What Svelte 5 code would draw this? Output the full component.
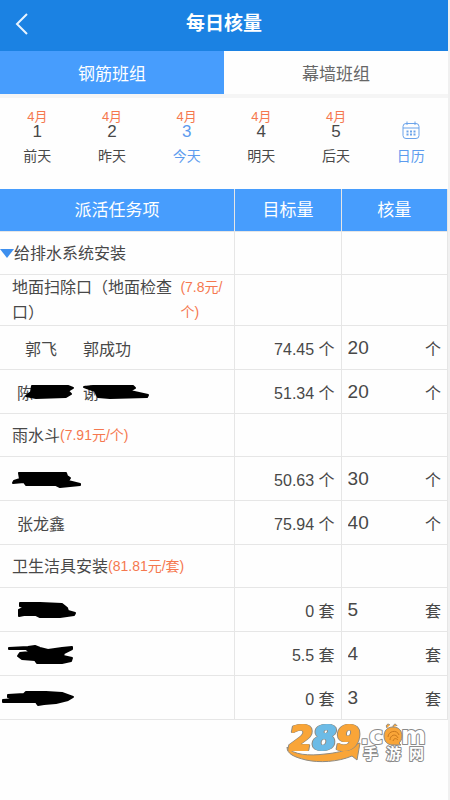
<script>
  let activeTeam = $state(0);
  let activeDay = $state(3);

  const teams = ["钢筋班组", "幕墙班组"];

  const days = [
    { day: 1, label: "前天" },
    { day: 2, label: "昨天" },
    { day: 3, label: "今天" },
    { day: 4, label: "明天" },
    { day: 5, label: "后天" },
  ];

  // people without a readable name are covered by a black scribble
  let rows = $state([
    { type: "root", name: "给排水系统安装" },
    { type: "task", name: "地面扫除口（地面检查口）", price: "(7.8元/个)" },
    { type: "person", people: ["郭飞", "郭成功"], target: "74.45", unit: "个", value: "20" },
    {
      type: "person", people: ["陈", "谢"], target: "51.34", unit: "个", value: "20", masked: true,
      scribbles: [
        "32,16 68,16 73,18 68,21 71,24 66,27 36,28 26,26 31,22",
        "84,17 93,16 133,16 135,18 130,21 148,25 147,27 110,28 98,27 95,21",
      ],
    },
    { type: "task", name: "雨水斗", price: "(7.91元/个)" },
    {
      type: "person", people: [], target: "50.63", unit: "个", value: "30",
      scribbles: ["19,16 66,16 67,19 70,21 68,24 80,27 80,28 70,29 60,30 56,28 26,28 24,25 13,26 14,24 20,22"],
    },
    { type: "person", people: ["张龙鑫"], target: "75.94", unit: "个", value: "40" },
    { type: "task", name: "卫生洁具安装", price: "(81.81元/套)" },
    {
      type: "person", people: [], target: "0", unit: "套", value: "5",
      scribbles: ["20,15 40,15 62,16 67,20 68,23 75,25 74,27 60,29 40,29 36,27 24,27 19,28 19,22 25,19 20,18"],
    },
    {
      type: "person", people: [], target: "5.5", unit: "套", value: "4",
      scribbles: ["9,16 28,15 35,14 40,16 48,18 62,16 72,15 72,17 64,21 63,24 72,26 71,29 62,31 37,31 35,28 22,27 18,24 20,21 30,20 26,17 9,17"],
    },
    {
      type: "person", people: [], target: "0", unit: "套", value: "3",
      scribbles: ["8,19 24,18 26,16 46,16 62,17 73,21 68,24 56,27 44,28 38,29 36,26 3,26 3,24 16,23 8,21"],
    },
  ]);
</script>

<main class="page">
  <header class="topbar">
    <button class="back" aria-label="返回">
      <svg viewBox="0 0 14 22" width="14" height="22">
        <path d="M12 1 2 11l10 10" />
      </svg>
    </button>
    <h1>每日核量</h1>
  </header>

  <nav class="teams">
    {#each teams as team, i}
      <button class:active={activeTeam === i} onclick={() => (activeTeam = i)}>{team}</button>
    {/each}
  </nav>

  <section class="days">
    {#each days as d}
      <button class:active={activeDay === d.day} onclick={() => (activeDay = d.day)}>
        <span class="month">4月</span>
        <span class="num">{d.day}</span>
        <span class="label">{d.label}</span>
      </button>
    {/each}
    <button class="calendar">
      <svg viewBox="0 0 18 19" width="18" height="19">
        <rect x="1" y="2.5" width="16" height="15" rx="3" />
        <path d="M1 7h16M5 .5v3.500M13 .5v3.500" />
        <path class="dots" d="M4.500 10.500h2M8 10.500h2M11.500 10.500h2M4.500 13.500h2M8 13.500h2M11.500 13.500h2" />
      </svg>
      <span class="label">日历</span>
    </button>
  </section>

  <table>
    <thead>
      <tr>
        <th class="task-col">派活任务项</th>
        <th>目标量</th>
        <th>核量</th>
      </tr>
    </thead>
    <tbody>
      {#each rows as row}
        <tr class={row.type}>
          {#if row.type === "person"}
            <td>
              <div class="people">
                {#each row.people as person}
                  <span class:masked={row.masked}>{person}</span>
                {/each}
              </div>
              {#if row.scribbles}
                <svg class="scribble" viewBox="0 0 160 43" width="160" height="43" aria-hidden="true">
                  {#each row.scribbles as points}
                    <polygon {points} />
                  {/each}
                </svg>
              {/if}
            </td>
            <td class="target">{row.target} {row.unit}</td>
            <td>
              <label class="amount">
                <input type="text" inputmode="decimal" aria-label="核量" bind:value={row.value} />
                <span>{row.unit}</span>
              </label>
            </td>
          {:else}
            <td>
              <div class="task-name">
                {#if row.type === "root"}
                  <svg class="caret" viewBox="0 0 14 9" width="14" height="9"><path d="M0 0h14L7 9z" /></svg>
                {/if}
                <span class="name">{row.name}</span>
                {#if row.price}<span class="price">{row.price}</span>{/if}
              </div>
            </td>
            <td></td>
            <td></td>
          {/if}
        </tr>
      {/each}
    </tbody>
  </table>

  <svg class="logo" viewBox="0 0 150 46" width="150" height="46" role="img" aria-label="289.com 手游网">
    <path class="swoosh" d="M7 29c6 8 22 9 38 7 11-1 19-3 25-6l-2-1 12-4-3 17-5-4c-14 6-33 7-46 4C14 39 7 36 7 29z" />
    <text class="big" x="9" y="32">2<tspan class="sky">8</tspan>9</text>
    <text class="dot" x="80" y="26">.c</text>
    <text class="dot" x="121" y="26">m</text>
    <path class="snail" d="M107 10c-2-3 1-5 3-3M113 9c0-3 3-4 4-1M113 9c6 0 9 4 9 9 0 4-2 6-3 7l2 2h-8c-6 0-9-4-9-9s3-9 9-9z" />
    <path class="shell" d="M108 19c0-6 9-8 11-2M110 22c0-5 6-7 8-2M113 23c1-3 3-3 5-1" />
    <text class="cn" x="83" y="41">手</text>
    <text class="cn" x="106" y="41">游</text>
    <text class="cn" x="129" y="41">网</text>
  </svg>
</main>

<style>
  :global(body) {
    margin: 0;
    background: #fefefe;
  }

  .page {
    --blue: #1b82e3;
    --light-blue: #479dfd;
    --orange: #f5784f;
    --text: #484848;
    --line: #e6e6e6;
    position: relative;
    box-sizing: border-box;
    min-height: 100vh;
    border-right: 2px solid #f0f0f0;
    color: var(--text);
    font-family: "Liberation Sans", "Noto Sans CJK SC", sans-serif;
    font-size: 16px;
  }

  button {
    margin: 0;
    padding: 0;
    border: 0;
    background: none;
    color: inherit;
    font: inherit;
    cursor: pointer;
  }

  .topbar {
    display: grid;
    grid-template-columns: 48px 1fr 48px;
    align-items: center;
    box-sizing: border-box;
    height: 51px;
    padding-bottom: 4px;
    background: var(--blue);
    color: #fff;
  }

  .back {
    height: 44px;
  }

  .back svg {
    display: block;
    margin-left: 15px;
  }

  .back path {
    fill: none;
    stroke: #e8f4ff;
    stroke-width: 2;
  }

  h1 {
    margin: 0;
    font-size: 19px;
    line-height: 28px;
    text-align: center;
  }

  .teams {
    display: flex;
    border-bottom: 4px solid #f5f5f5;
  }

  .teams button {
    flex: 1;
    height: 43px;
    font-size: 17px;
    color: #666;
  }

  .teams button.active {
    background: var(--light-blue);
    color: #fff;
  }

  .days {
    display: flex;
    height: 91px;
  }

  .days button {
    flex: 1;
    display: flex;
    flex-direction: column;
    align-items: center;
    padding-top: 12px;
  }

  .month {
    font-size: 13px;
    line-height: 14px;
    color: var(--orange);
  }

  .num {
    font-size: 17px;
    line-height: 16px;
  }

  .label {
    margin-top: 6px;
    font-size: 14px;
    line-height: 20px;
  }

  .days .active .num,
  .days .active .label,
  .days .calendar {
    color: #5c9bee;
  }

  .days .calendar {
    padding-top: 23px;
  }

  .calendar svg {
    fill: none;
    stroke: #6ba3ea;
  }

  .calendar .dots {
    stroke-width: 2;
  }

  table {
    width: 100%;
    table-layout: fixed;
    border-collapse: separate;
    border-spacing: 0;
  }

  th,
  td {
    box-sizing: border-box;
    padding: 0;
    border-right: 1px solid var(--line);
    border-bottom: 1px solid var(--line);
  }

  th {
    height: 43px;
    padding-bottom: 3px;
    background: var(--light-blue);
    color: #fff;
    font-size: 17px;
    font-weight: 400;
  }

  .task-col {
    width: 52.5%;
  }

  td {
    position: relative;
    height: 44px;
  }

  .root td,
  .task td {
    height: 43px;
  }

  .task-name {
    display: flex;
    align-items: center;
    padding: 0 8px 0 12px;
    line-height: 25px;
  }

  .root .task-name {
    padding-left: 0;
  }

  .name {
    flex-shrink: 1;
  }

  .price {
    flex-shrink: 2;
    font-size: 14px;
    color: var(--orange);
  }

  .caret {
    flex: none;
    fill: #3d8fee;
  }

  .people {
    display: flex;
    gap: 18px;
    padding-left: 17px;
  }

  .people span {
    width: 48px;
    text-align: center;
  }

  .people .masked {
    text-align: left;
  }

  .scribble {
    position: absolute;
    top: 0;
    left: 0;
    fill: #000;
    stroke: #000;
    stroke-width: 2;
    stroke-linejoin: round;
  }

  .target {
    padding-right: 6px;
    text-align: right;
  }

  .amount {
    display: flex;
    align-items: center;
    padding: 0 6px;
  }

  .amount input {
    flex: 1;
    min-width: 0;
    padding: 0;
    border: 0;
    outline: 0;
    background: none;
    color: inherit;
    font: inherit;
    font-size: 19px;
  }

  .logo {
    position: absolute;
    right: 18px;
    bottom: 36px;
  }

  .logo text {
    font-family: "DejaVu Sans", sans-serif;
    font-weight: 700;
    stroke: #8a8a8a;
    stroke-width: 2;
    stroke-linejoin: round;
    paint-order: stroke;
    fill: #fff;
  }

  /* fat digits: stroke in the fill colour, thin grey rim from the shadows */
  .logo .big {
    font-size: 34px;
    font-style: italic;
    fill: #f9a538;
    stroke: #f9a538;
    filter: drop-shadow(1px 0 0 #8f8a80) drop-shadow(-1px 0 0 #8f8a80);
  }

  .logo .sky {
    fill: #6cbbe6;
    stroke: #6cbbe6;
  }

  .logo .dot {
    font-size: 24px;
  }

  .logo .cn {
    font-family: "Noto Sans CJK SC", sans-serif;
    font-size: 15px;
  }

  .swoosh,
  .snail {
    fill: #f9a538;
    stroke: #8f8a80;
  }

  .shell {
    fill: none;
    stroke: #c9781d;
    stroke-width: 1;
  }
</style>
